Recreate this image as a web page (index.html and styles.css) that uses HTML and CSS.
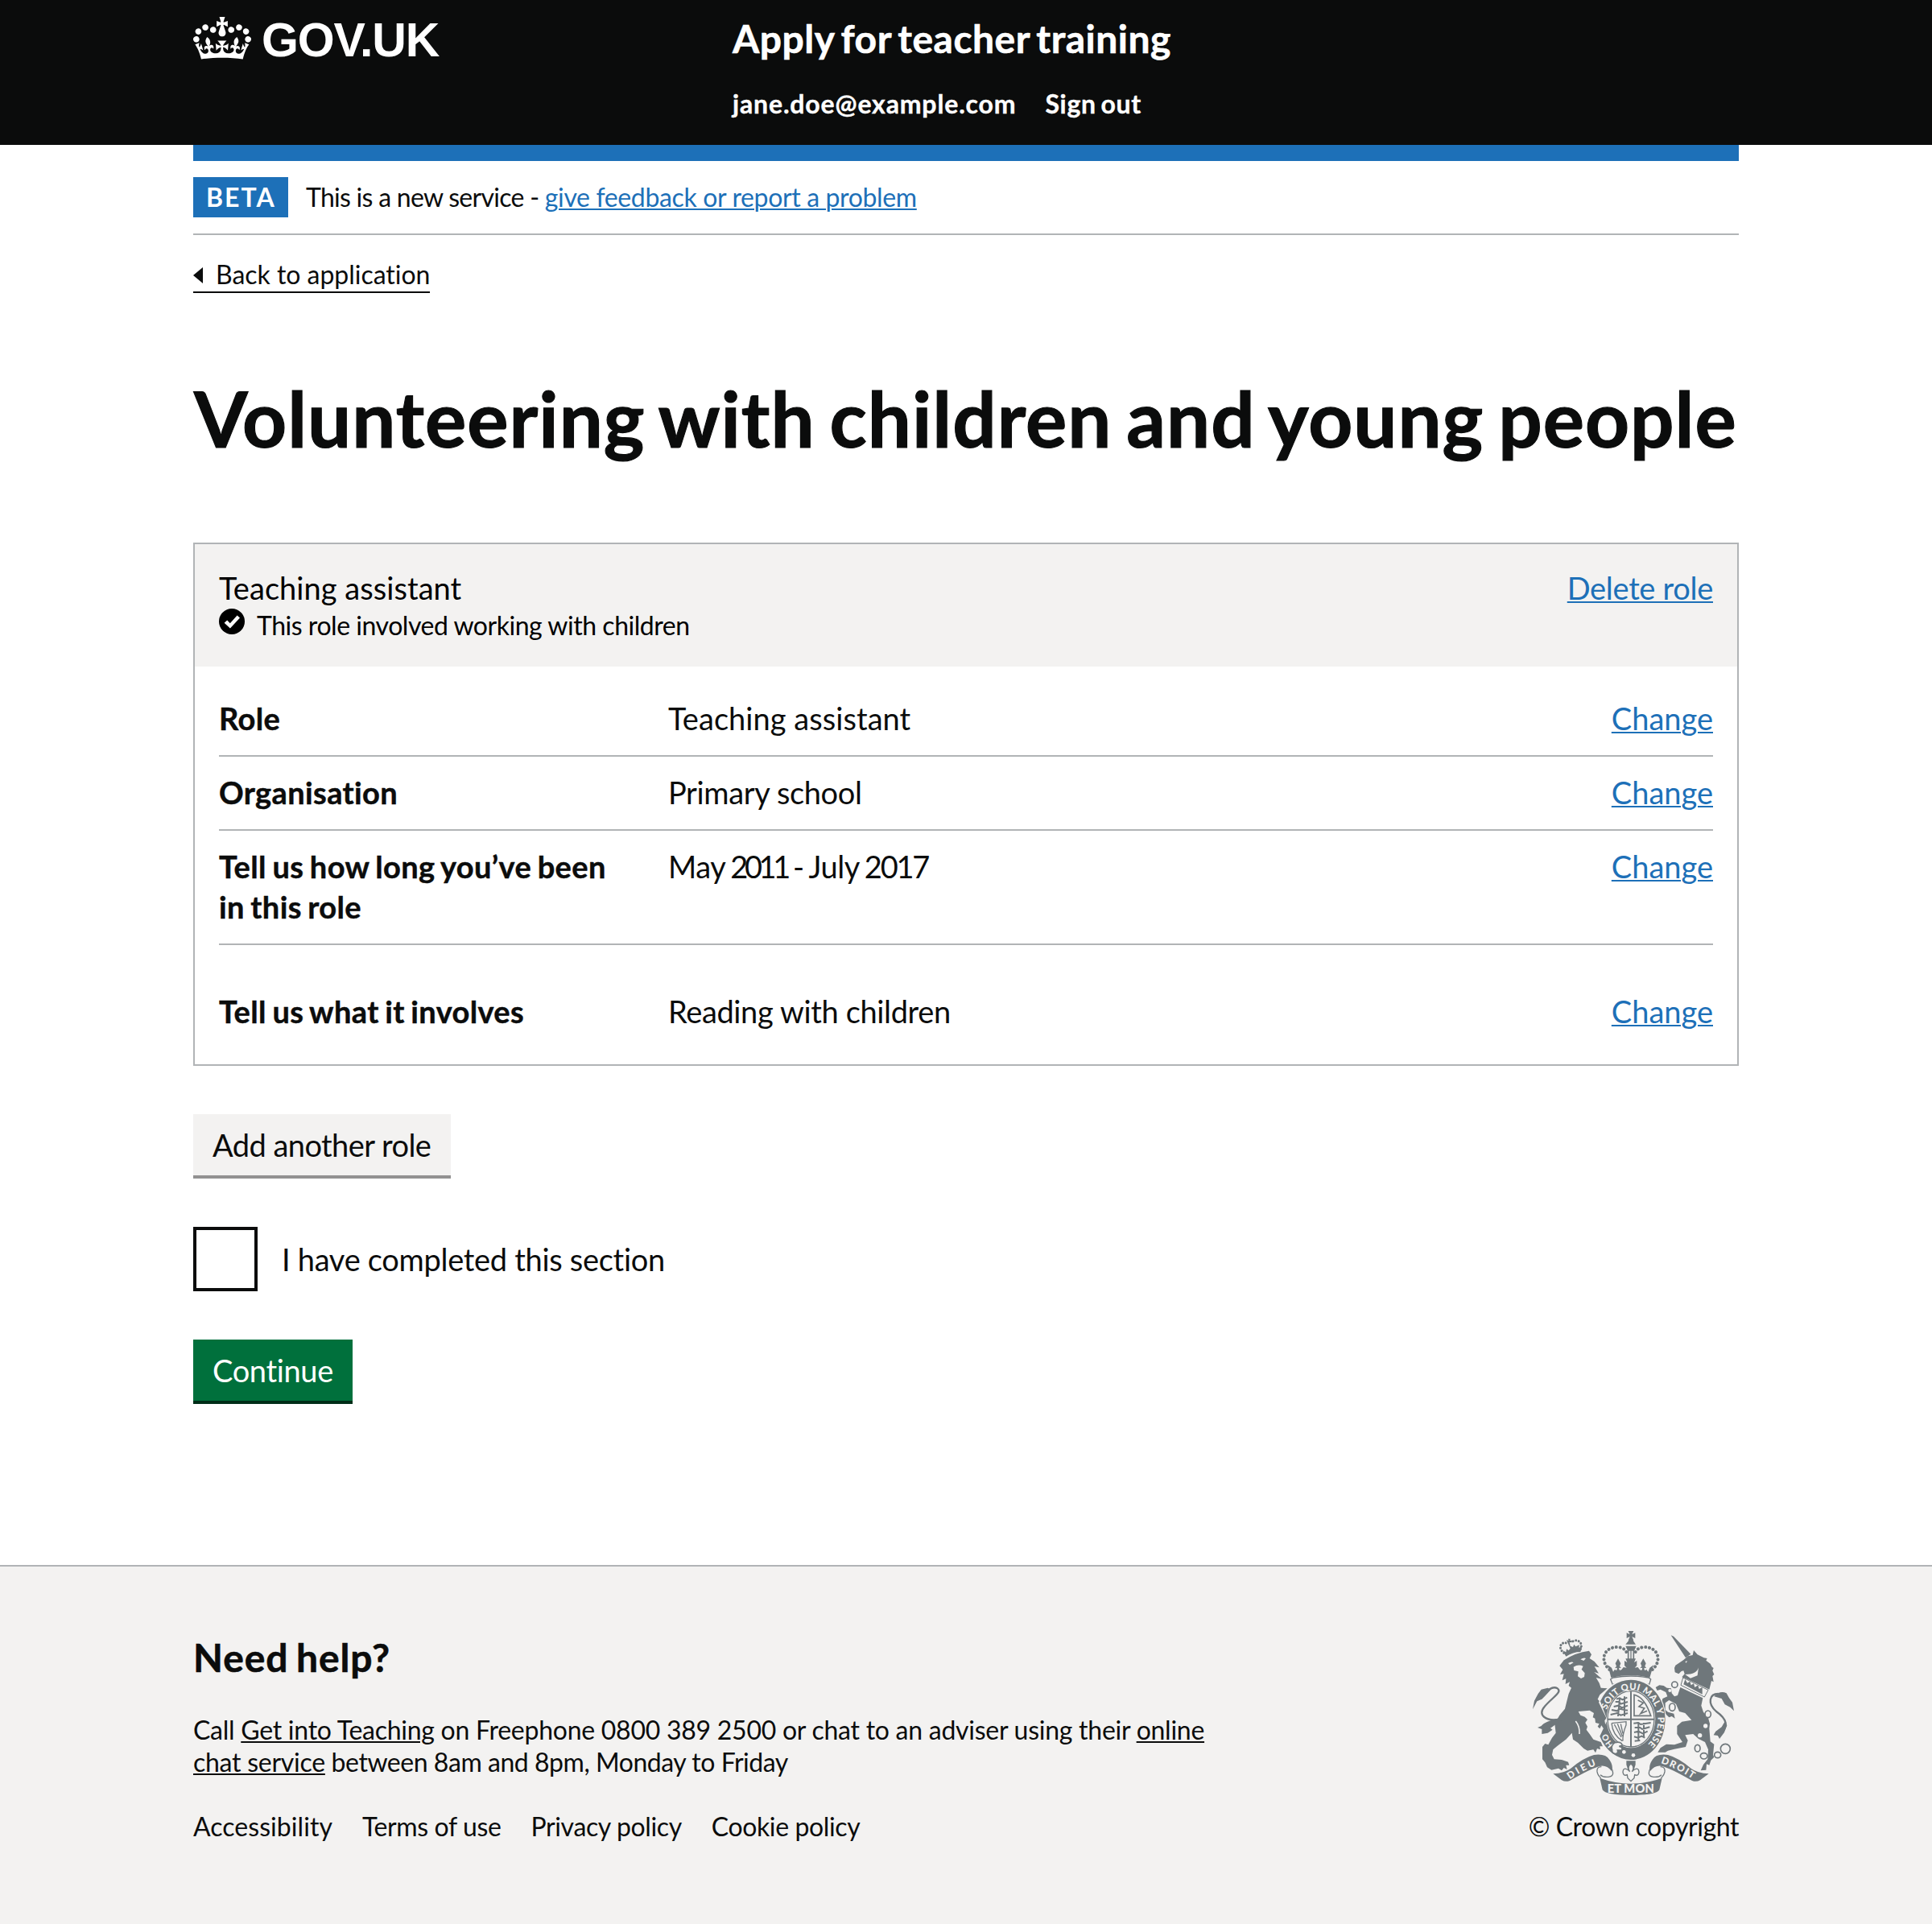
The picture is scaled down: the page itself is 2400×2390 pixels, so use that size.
FILE: index.html
```html
<!DOCTYPE html>
<html lang="en">
<head>
<meta charset="utf-8">
<title>Volunteering with children and young people - Apply for teacher training - GOV.UK</title>
<link rel="stylesheet" href="styles.css">
</head>
<body>
<header class="header">
  <div class="container header-row">
    <a class="logo" href="#">
      <svg class="logo-crown" viewBox="0 0 132 97" aria-hidden="true"><path fill="currentColor" fill-rule="evenodd" d="M25 30.2c3.5 1.5 7.7-.2 9.1-3.7 1.5-3.6-.2-7.8-3.9-9.2-3.6-1.4-7.6.3-9.1 3.9-1.4 3.5.3 7.5 3.9 9zM9 39.5c3.6 1.5 7.8-.2 9.2-3.7 1.5-3.6-.2-7.8-3.9-9.1-3.6-1.5-7.6.2-9.1 3.8-1.4 3.5.3 7.5 3.8 9zM4.4 57.2c3.5 1.5 7.7-.2 9.1-3.8 1.5-3.6-.2-7.7-3.9-9.1-3.5-1.5-7.6.3-9.1 3.8-1.4 3.5.3 7.6 3.9 9.1zm38.3-21.4c3.5 1.5 7.7-.2 9.1-3.8 1.5-3.6-.2-7.7-3.9-9.1-3.6-1.5-7.6.3-9.1 3.8-1.3 3.6.4 7.7 3.9 9.1zm64.4-5.6c-3.6 1.5-7.8-.2-9.1-3.7-1.5-3.6.2-7.8 3.8-9.2 3.6-1.4 7.7.3 9.2 3.9 1.3 3.5-.4 7.5-3.9 9zm15.9 9.3c-3.6 1.5-7.7-.2-9.1-3.7-1.5-3.6.2-7.8 3.7-9.1 3.6-1.5 7.7.2 9.2 3.8 1.5 3.5-.3 7.5-3.8 9zm4.7 17.7c-3.6 1.5-7.8-.2-9.2-3.8-1.5-3.6.2-7.7 3.9-9.1 3.6-1.5 7.7.3 9.2 3.8 1.3 3.5-.4 7.6-3.9 9.1zM89.3 35.8c-3.6 1.5-7.8-.2-9.2-3.8-1.4-3.6.2-7.7 3.9-9.1 3.6-1.5 7.7.3 9.2 3.8 1.4 3.6-.3 7.7-3.9 9.1zM69.7 17.7l8.9 4.7V9.3l-8.9 2.8c-.2-.3-.5-.6-.9-.9L72.4 0H59.6l3.5 11.2c-.3.3-.6.5-.9.9l-8.8-2.8v13.1l8.8-4.7c.3.3.6.7.9.9l-5 15.4v.1c-.2.8-.4 1.6-.4 2.4 0 4.1 3.1 7.5 7 8.1h.2c.3 0 .7.1 1 .1.4 0 .7 0 1-.1h.2c4-.6 7.1-4.1 7.1-8.1 0-.8-.1-1.7-.4-2.4V34l-5.1-15.4c.4-.2.7-.6 1-.9zM66 92.8c16.9 0 32.8 1.1 47.1 3.2 4-16.9 8.9-26.7 14-33.5l-9.6-3.4c1 4.9 1.1 7.2 0 10.2-1.5-1.4-3-4.3-4.2-8.7L108.6 76c2.8-2 5-3.2 7.5-3.3-4.4 9.4-10 11.9-13.6 11.2-4.3-.8-6.3-4.6-5.6-7.9 1-4.7 5.7-5.9 8-.5 4.3-8.7-3-11.4-7.6-8.8 7.1-7.2 7.9-13.5 2.1-21.1-8 6.1-8.1 12.3-4.5 20.8-4.7-5.4-12.1-2.5-9.5 6.2 3.4-5.2 7.9-2 7.2 3.1-.6 4.3-6.4 7.8-13.5 7.2-10.3-.9-10.9-8-11.2-13.8 2.5-.5 7.1 1.8 11 7.3L80.2 60c-4.1 4.4-8 5.3-12.3 5.4 1.4-4.4 8-11.6 8-11.6H55.5s6.4 7.2 7.9 11.6c-4.2-.1-8-1-12.3-5.4l1.4 16.4c3.9-5.5 8.5-7.7 10.9-7.3-.3 5.8-.9 12.8-11.1 13.8-7.2.6-12.9-2.9-13.5-7.2-.7-5 3.8-8.3 7.1-3.1 2.7-8.7-4.6-11.6-9.4-6.2 3.7-8.5 3.6-14.7-4.6-20.8-5.8 7.6-5 13.9 2.2 21.1-4.7-2.6-11.9.1-7.7 8.8 2.3-5.5 7.1-4.2 8.1.5.7 3.3-1.3 7.1-5.7 7.9-3.5.7-9-1.8-13.5-11.2 2.5.1 4.7 1.3 7.5 3.3l-4.7-15.4c-1.2 4.4-2.7 7.2-4.3 8.7-1.1-3-.9-5.3 0-10.2l-9.5 3.4c5 6.9 9.9 16.7 14 33.5 14.8-2.1 30.8-3.2 47.7-3.2z"/></svg>
      <span class="logo-text">GOV.UK</span>
    </a>
    <div class="header-content">
      <a class="service-name" href="#">Apply for teacher training</a>
      <nav class="header-nav">
        <a class="user-email" href="#">jane.doe@example.com</a>
        <a class="sign-out" href="#">Sign out</a>
      </nav>
    </div>
  </div>
</header>

<div class="container">
  <div class="header-bar"></div>
  <div class="phase-banner">
    <strong class="tag">BETA</strong>
    <span class="phase-text">This is a new service - </span><a class="link phase-link" href="#">give feedback or report a problem</a>
  </div>
  <a class="back-link" href="#">
    <svg class="back-arrow" viewBox="0 0 12 20" aria-hidden="true"><path d="M0 10 12 0v20z"/></svg>
    Back to application
  </a>

  <main>
    <h1 class="heading">Volunteering with children and young people</h1>

    <section class="card">
      <header class="card-header">
        <div>
          <h2 class="card-title">Teaching assistant</h2>
          <p class="card-note">
            <svg class="tick" viewBox="0 0 32 32" aria-hidden="true"><circle cx="16" cy="16" r="16"/><path d="M6.6 17.8l3.600-3.400 3.600 3.800L22.600 8.400l3.400 3.200L13.900 24.600z" fill="#fff"/></svg>
            <span>This role involved working with children</span>
          </p>
        </div>
        <a class="link delete" href="#">Delete role</a>
      </header>
      <dl class="summary">
        <div class="row"><dt>Role</dt><dd class="ta">Teaching assistant</dd><dd class="action"><a class="link" href="#">Change</a></dd></div>
        <div class="row"><dt>Organisation</dt><dd>Primary school</dd><dd class="action"><a class="link" href="#">Change</a></dd></div>
        <div class="row"><dt>Tell us how long you’ve been in this role</dt><dd class="dates">May <span class="y2011">2011</span> - July <span class="y2017">2017</span></dd><dd class="action"><a class="link" href="#">Change</a></dd></div>
        <div class="row row-last"><dt>Tell us what it involves</dt><dd>Reading with children</dd><dd class="action"><a class="link" href="#">Change</a></dd></div>
      </dl>
    </section>

    <a class="button button-secondary" href="#">Add another role</a>
    <label class="checkbox"><input type="checkbox"><span>I have completed this section</span></label>
    <button class="button button-primary" type="button">Continue</button>
  </main>
</div>

<footer class="footer">
  <div class="container footer-row">
    <div class="footer-main">
      <h2>Need help?</h2>
      <p>Call <a href="#">Get into Teaching</a> on Freephone 0800 389 2500 or chat to an adviser using their <a href="#">online<br>chat service</a><span class="hours"> between 8am and 8pm, Monday to Friday</span></p>
      <ul class="footer-links">
        <li class="l1">Accessibility</li><li>Terms of use</li><li>Privacy policy</li><li>Cookie policy</li>
      </ul>
    </div>
    <div class="footer-crest">
      <svg class="crest" viewBox="72 78 750 612" fill="#6f777b" aria-hidden="true">
        <!-- crown over the shield -->
        <path d="M428 78h20l-6 13 12-6v20l-12-6 6 14h-20l6-14-12 6V85l12 6zM430 113h16l10 15h-38zM418 134h40l-8 18h-24z"/>
        <path d="M428 150v38M448 150v38" fill="none" stroke="#6f777b" stroke-width="5"/>
        <path d="M438 150v38" fill="none" stroke="#6f777b" stroke-width="4"/>
        <g fill="none" stroke="#6f777b" stroke-linecap="round">
          <path d="M358 222C322 190 334 140 386 138C404 138 416 146 421 156" stroke-width="12" stroke-dasharray=".1 14.500"/>
          <path d="M518 222C554 190 542 140 490 138C472 138 460 146 455 156" stroke-width="12" stroke-dasharray=".1 14.500"/>
        </g>
        <path d="M352 205l14 10 6 15 6-9c4 6 10 4 8-6l-8 2 6-8-4-10 10-18 10 18-4 10 6 8-8-2c-2 10 4 12 10 6l6-8 12 2-8-8v-18l10 6-6-14h38l-6 14 10-6v18l-8 8 12-2 6 8c6 6 12 4 10-6l-8 2 6-8-4-10 10-18 10 18-4 10 6 8-8-2c-2 10 4 12 8 6l6 9 6-15 14-10-14 47q-71-18-144 0z"/>
        <path d="M372 252q66-12 132 0l8 6-6 20q-68-24-136 0l-8-20z" fill="#f3f2f1" stroke="#6f777b" stroke-width="4"/>
        <!-- lion -->
        <path d="M188 160C160 138 184 112 202 126M250 146C262 120 236 102 214 122" fill="none" stroke="#6f777b" stroke-linecap="round" stroke-width="9" stroke-dasharray=".1 11"/>
        <path d="M198 112l8 2-2-7 8 0-1 7 8-1-2 8-8-1 3 14 10 4 4-10 6 8 14-6-2 10 12-4-6 20q-28 0-54 17l-12-22 12 6 2-12 8 6 6-8z"/>
        <path d="M188 187Q232 158 282 152L291 166 284 180 302 192 320 214 302 210 318 236 301 231 330 257 308 252 320 272 326 290 350 292 322 316 314 332 336 356 350 398 340 412 344 436 336 442 328 430 322 442 314 434 320 424 306 420 304 404 296 400 300 384 284 374 242 378 250 392 266 398 276 408 268 420 276 434 272 446 284 462 298 482 326 492 333 508 322 508 324 520 312 516 306 532 298 520 276 524 262 516 240 494 222 482 218 458 196 482 164 506 148 520 144 540 152 556 180 558 204 566 208 578 196 578 200 594 188 588 180 598 168 590 142 596 126 586 118 568 108 556 108 510 118 498 130 502 144 476 158 458 154 424 172 392 192 368 206 312 216 290 206 282 210 268 194 276 196 256 182 262 188 238 174 240 184 222 172 208z"/>
        <path d="M204 198q14-8 20-2l-14 8zM250 184q12-8 20-4l-8 9zM224 212q18-12 36-3l-6 12 12 14-2 14-12 6-12-8 2-18-16-4z" fill="#f3f2f1"/>
        <path d="M232 414q16 20 14 48" fill="none" stroke="#f3f2f1" stroke-width="5"/>
        <path d="M168 408C122 414 88 392 116 360C144 326 184 306 164 292C150 284 134 292 118 312" fill="none" stroke="#6f777b" stroke-width="7"/>
        <path d="M72 370L78 338 92 312 104 296 128 290 140 296 120 318 106 332 88 340zM176 402C136 410 114 420 104 432L90 438 106 444 106 462 128 458 146 446 138 440 178 412z"/>
        <!-- unicorn -->
        <path d="M587 94l10 4 64 66-19 14z"/>
        <path d="M600 216L604 206 634 186 650 172 668 168 672 150 686 166 710 178 722 180 718 188 734 200 740 212 746 216 742 226 748 240 742 246 746 268 738 264 730 296 700 282 640 254 628 250 638 238 634 226 626 228 616 238 602 232z"/>
        <path d="M640 240q44 0 50-26l-4 30-26 10z" fill="#f3f2f1"/>
        <path d="M640 192l8-2-4 7z" fill="#f3f2f1"/>
        <path d="M632 252L726 298 712 324 624 280z" fill="#f3f2f1" stroke="#6f777b" stroke-width="3"/>
        <path d="M634 277L640 258 648 272 658 266 662 280 672 274 676 288 688 280 692 294 704 288 704 314z"/>
        <path d="M622 288L706 328 700 356 708 380 726 402 732 424 730 442 734 490 748 500 744 540 748 548 736 560 730 578 720 574 718 596 698 598 708 576 724 556 726 520 714 492 690 480 670 462 640 466 650 486 642 510 600 518 576 524 566 530 538 530 548 514 570 500 600 502 630 492 610 462 610 432 628 416 664 410 640 384 618 378 606 350 580 336 566 346 566 372 576 380 598 386 602 404 590 396 580 400 570 390 562 374 552 346 556 330 574 322 568 306 548 296 536 300 530 288 544 280 560 282 572 290 588 292 590 310 600 322 612 318z"/>
        <path d="M762 468C812 434 790 402 756 378C722 348 730 312 764 312" fill="none" stroke="#6f777b" stroke-width="7"/>
        <path d="M748 322Q770 298 794 310L804 328 816 344 822 376 808 362 788 352 776 330zM790 412L796 430 786 456 768 480 762 468 746 466 754 452 776 436z"/>
        <g fill="#f3f2f1" stroke="#6f777b" stroke-width="5"><circle cx="601" cy="278" r="11"/><ellipse cx="592" cy="362" rx="11" ry="14"/><ellipse cx="725" cy="388" rx="11" ry="13"/><ellipse cx="686" cy="515" rx="10" ry="13"/><ellipse cx="710" cy="544" rx="13" ry="11"/><ellipse cx="761" cy="540" rx="12" ry="11"/><circle cx="790" cy="517" r="18"/></g>
        <g fill="#f3f2f1"><circle cx="716" cy="432" r="8"/><circle cx="695" cy="467" r="8"/><circle cx="583" cy="300" r="6"/></g>
        <!-- garter and shield -->
        <path d="M438 255A131 153 0 0 1 438 561A131 153 0 0 1 324 484L350 410 318 344A131 153 0 0 1 438 255z" fill="#f3f2f1"/>
        <path d="M438 260A128 149 0 0 1 438 558A128 149 0 0 1 322 470L350 410 324 340A128 149 0 0 1 438 260z"/>
        <ellipse cx="438" cy="406" rx="91" ry="108" fill="#f3f2f1"/>
        <ellipse cx="438" cy="406" rx="87" ry="104" fill="none" stroke="#6f777b" stroke-width="4"/>
        <path d="M438 304v206M351 407h174" fill="none" stroke="#6f777b" stroke-width="6"/>
        <g fill="none" stroke="#6f777b" stroke-width="6">
          <path d="M384 332l12-4 10 6 18-8M380 342l14 0 6 8 26-8M374 360l18-4 12 8 22-8M366 372l20 4 10-8 30 6M362 390l24-6 14 8 26-8M414 322v74M396 330l-6 66"/>
          <path d="M448 422l18-2 8 6 38-6M452 438l20 0 8 6 28-8M450 456l16-4 16 8 18-8M450 472l14 4 14-6 12 6M452 488l20-2M466 418v70M486 420v56"/>
          <path d="M450 316q38 6 62 78h-62zM464 336l20 10-16 14 20 6-14 20 24-10" stroke-width="5"/>
          <path d="M366 422l54-6v12q-14 36-12 60M366 422q4 44 40 66M376 426l26 48M388 424l18 46M400 424l8 36" stroke-width="4"/>
        </g>
        <g fill="#f3f2f1" font-family="Lato, sans-serif" font-weight="900" font-size="34">
          <path id="g1" d="M348 372A98 113 0 1 1 486 510" fill="none"/>
          <path id="g2" d="M374 502A98 113 0 0 1 343 430" fill="none"/>
          <text textLength="392"><textPath href="#g1">SOIT QUI MAL Y PENSE</textPath></text>
          <text font-size="31" textLength="50"><textPath href="#g2">HO</textPath></text>
          <circle cx="412" cy="529" r="7"/><circle cx="447" cy="541" r="7"/>
        </g>
        <path d="M378 494q24-6 28 10l-12 4q14 2 10 14l-16 0q4 12-8 14-14-2-12-16-6-14 10-26z" fill="#f3f2f1" stroke="#6f777b" stroke-width="5"/>
        <path d="M421 562h34v14l-6 20h-22l-6-20z"/>
        <path d="M438 572q16 14 4 30 24-22 26 2-2 16-16 10l-2 12-12 12-12-12-2-12q-14 6-16-10 2-24 26-2-12-16 4-30z" fill="#f3f2f1" stroke="#6f777b" stroke-width="4"/>
        <!-- motto ribbon -->
        <path d="M148 610Q190 608 214 590 262 550 300 540 344 534 358 558 374 582 366 600 346 576 322 582 294 588 210 636 194 642 180 634zM728 610Q686 608 662 590 614 550 576 540 532 534 518 558 502 582 510 600 530 576 554 582 582 588 666 636 682 642 696 634zM322 626q116 42 232 0l-10 44q-12 20-106 20t-106-20z"/>
        <path d="M366 590q14 30-12 32-20 2-30-8M328 584q-18 0-16 18 2 14 14 24M510 590q-14 30 12 32 20 2 30-8M548 584q18 0 16 18-2 14-14 24" fill="none" stroke="#6f777b" stroke-width="4"/>
        <g fill="#f3f2f1" font-family="Lato, sans-serif" font-weight="900">
          <path id="m1" d="M210 632Q264 592 330 572" fill="none"/><path id="m2" d="M549 570Q612 590 680 638" fill="none"/>
          <text font-size="36" textLength="112"><textPath href="#m1">DIEU</textPath></text>
          <text font-size="36" textLength="132"><textPath href="#m2">DROIT</textPath></text>
          <text x="350" y="682" font-size="44" textLength="174">ET MON</text>
        </g>
      </svg>
      <span>© Crown copyright</span>
    </div>
  </div>
</footer>
</body>
</html>
```
FILE: styles.css
```css
* { box-sizing: border-box; }
body {
  margin: 0;
  background: #fff;
  color: #0b0c0c;
  font: 400 38px/50px Lato, "Noto Sans", sans-serif;
  font-variant-ligatures: none;
}
h1, h2, p, dl, dd, dt, ul { margin: 0; padding: 0; }
a { color: inherit; text-decoration: none; }
svg { display: block; flex: none; }
.container { width: 1920px; margin: 0 auto; }
.link {
  color: #1d70b8;
  text-decoration: underline 2px;
  text-underline-offset: 2px;
}

.header { height: 180px; background: #0b0c0c; color: #fff; }
.header-row { display: flex; }
.logo { display: flex; gap: 13px; width: 670px; padding-top: 20px; }
.logo-crown { width: 72px; height: 53px; margin-top: 1px; }
.logo-text {
  font: 700 59px/60px "Liberation Sans", Arial, sans-serif;
  letter-spacing: -1.2px;
}
.header-content { padding-top: 18px; }
.service-name, .header-nav, .heading, .row dt, .footer h2 { -webkit-text-stroke: .012em currentColor; }
.service-name {
  display: block;
  font-size: 48px;
  font-weight: 700;
  line-height: 60px;
  letter-spacing: .5px;
  word-spacing: -4px;
}
.header-nav { display: flex; gap: 36px; margin-top: 31px; font-size: 32px; font-weight: 700; line-height: 40px; }
.user-email { letter-spacing: .85px; }
.sign-out { letter-spacing: .65px; word-spacing: -2.500px; }
.header-bar { height: 20px; background: #1d70b8; }

.phase-banner {
  display: flex;
  padding: 20px 0;
  border-bottom: 2px solid #b1b4b6;
  font-size: 32px;
  line-height: 50px;
}
.tag {
  width: 118px;
  height: 50px;
  margin-right: 22px;
  padding-left: 16px;
  background: #1d70b8;
  color: #fff;
  letter-spacing: 2px;
}
.phase-text { white-space: pre; letter-spacing: -.72px; }
.phase-link { letter-spacing: -.36px; }
.back-link {
  display: flex;
  width: 294px;
  gap: 16px;
  margin-top: 29px;
  padding-bottom: 1px;
  border-bottom: 2px solid #0b0c0c;
  font-size: 32px;
  line-height: 40px;
  letter-spacing: -.03px;
  white-space: nowrap;
}
.back-arrow { width: 12px; height: 20px; margin-top: 11px; fill: #0b0c0c; }

.heading {
  margin: 105px 0;
  padding-left: 1px;
  font-size: 96px;
  line-height: 100px;
  letter-spacing: 1px;
  word-spacing: -6.500px;
  white-space: nowrap;
}

.card { border: 2px solid #b1b4b6; }
.card-header {
  display: flex;
  justify-content: space-between;
  height: 152px;
  padding: 29px 30px 0;
  background: #f3f2f1;
  color: #000;
}
.card-title { font-size: 38px; font-weight: 400; letter-spacing: .05px; }
.card-note { display: flex; gap: 15px; margin-top: 2px; font-size: 32px; line-height: 40px; letter-spacing: -.47px; }
.tick { width: 32px; height: 32px; margin-top: -1px; }
.delete { letter-spacing: -.3px; }
.summary { padding: 20px 30px; }
.row {
  display: grid;
  grid-template-columns: 558px 1fr auto;
  padding: 19px 0 21px;
  border-bottom: 2px solid #b1b4b6;
}
.row-last { margin-top: 38px; border-bottom: 0; }
.row dt { padding-right: 70px; font-weight: 700; letter-spacing: .38px; word-spacing: -2.100px; }
.row dd { letter-spacing: -.36px; }
.row .ta { letter-spacing: .05px; }
.row .dates { letter-spacing: -.500px; word-spacing: -2.200px; }
.y2011 { letter-spacing: -4.400px; }
.y2017 { letter-spacing: -2.200px; }
.row .action { letter-spacing: 0; }

.button {
  display: block;
  height: 76px;
  padding: 0 24px;
  border: 0;
  font: inherit;
  line-height: 76px;
  text-align: left;
}
.button-secondary {
  width: 320px;
  margin-top: 60px;
  background: #f3f2f1;
  box-shadow: 0 4px 0 #929191;
  letter-spacing: -.55px;
}
.button-primary {
  width: 198px;
  margin-top: 60px;
  background: #00703c;
  color: #fff;
  box-shadow: 0 4px 0 #002d18;
  letter-spacing: -.35px;
}
.checkbox { display: flex; gap: 30px; margin-top: 64px; line-height: 80px; letter-spacing: -.3px; }
.checkbox input {
  appearance: none;
  width: 80px;
  height: 80px;
  margin: 0;
  border: 4px solid #0b0c0c;
  background: #fff;
}

.footer {
  height: 446px;
  margin-top: 204px;
  padding-top: 83px;
  border-top: 2px solid #b1b4b6;
  background: #f3f2f1;
  font-size: 32px;
  line-height: 40px;
}
.footer-row { display: flex; justify-content: space-between; }
.footer h2 { margin-bottom: 40px; font-size: 48px; line-height: 60px; letter-spacing: .9px; word-spacing: -3px; }
.footer p { letter-spacing: -.26px; white-space: nowrap; }
.footer p a { text-decoration: underline 2px; text-underline-offset: 2px; }
.footer .hours { letter-spacing: -.46px; }
.footer-links { display: flex; gap: 37px; margin-top: 40px; list-style: none; letter-spacing: -.38px; }
.footer-links .l1 { letter-spacing: .05px; }
.footer-crest { display: flex; flex-direction: column; align-items: center; letter-spacing: -.42px; }
.crest { width: 250px; height: 204px; margin: -3px 0 19px; }
```
